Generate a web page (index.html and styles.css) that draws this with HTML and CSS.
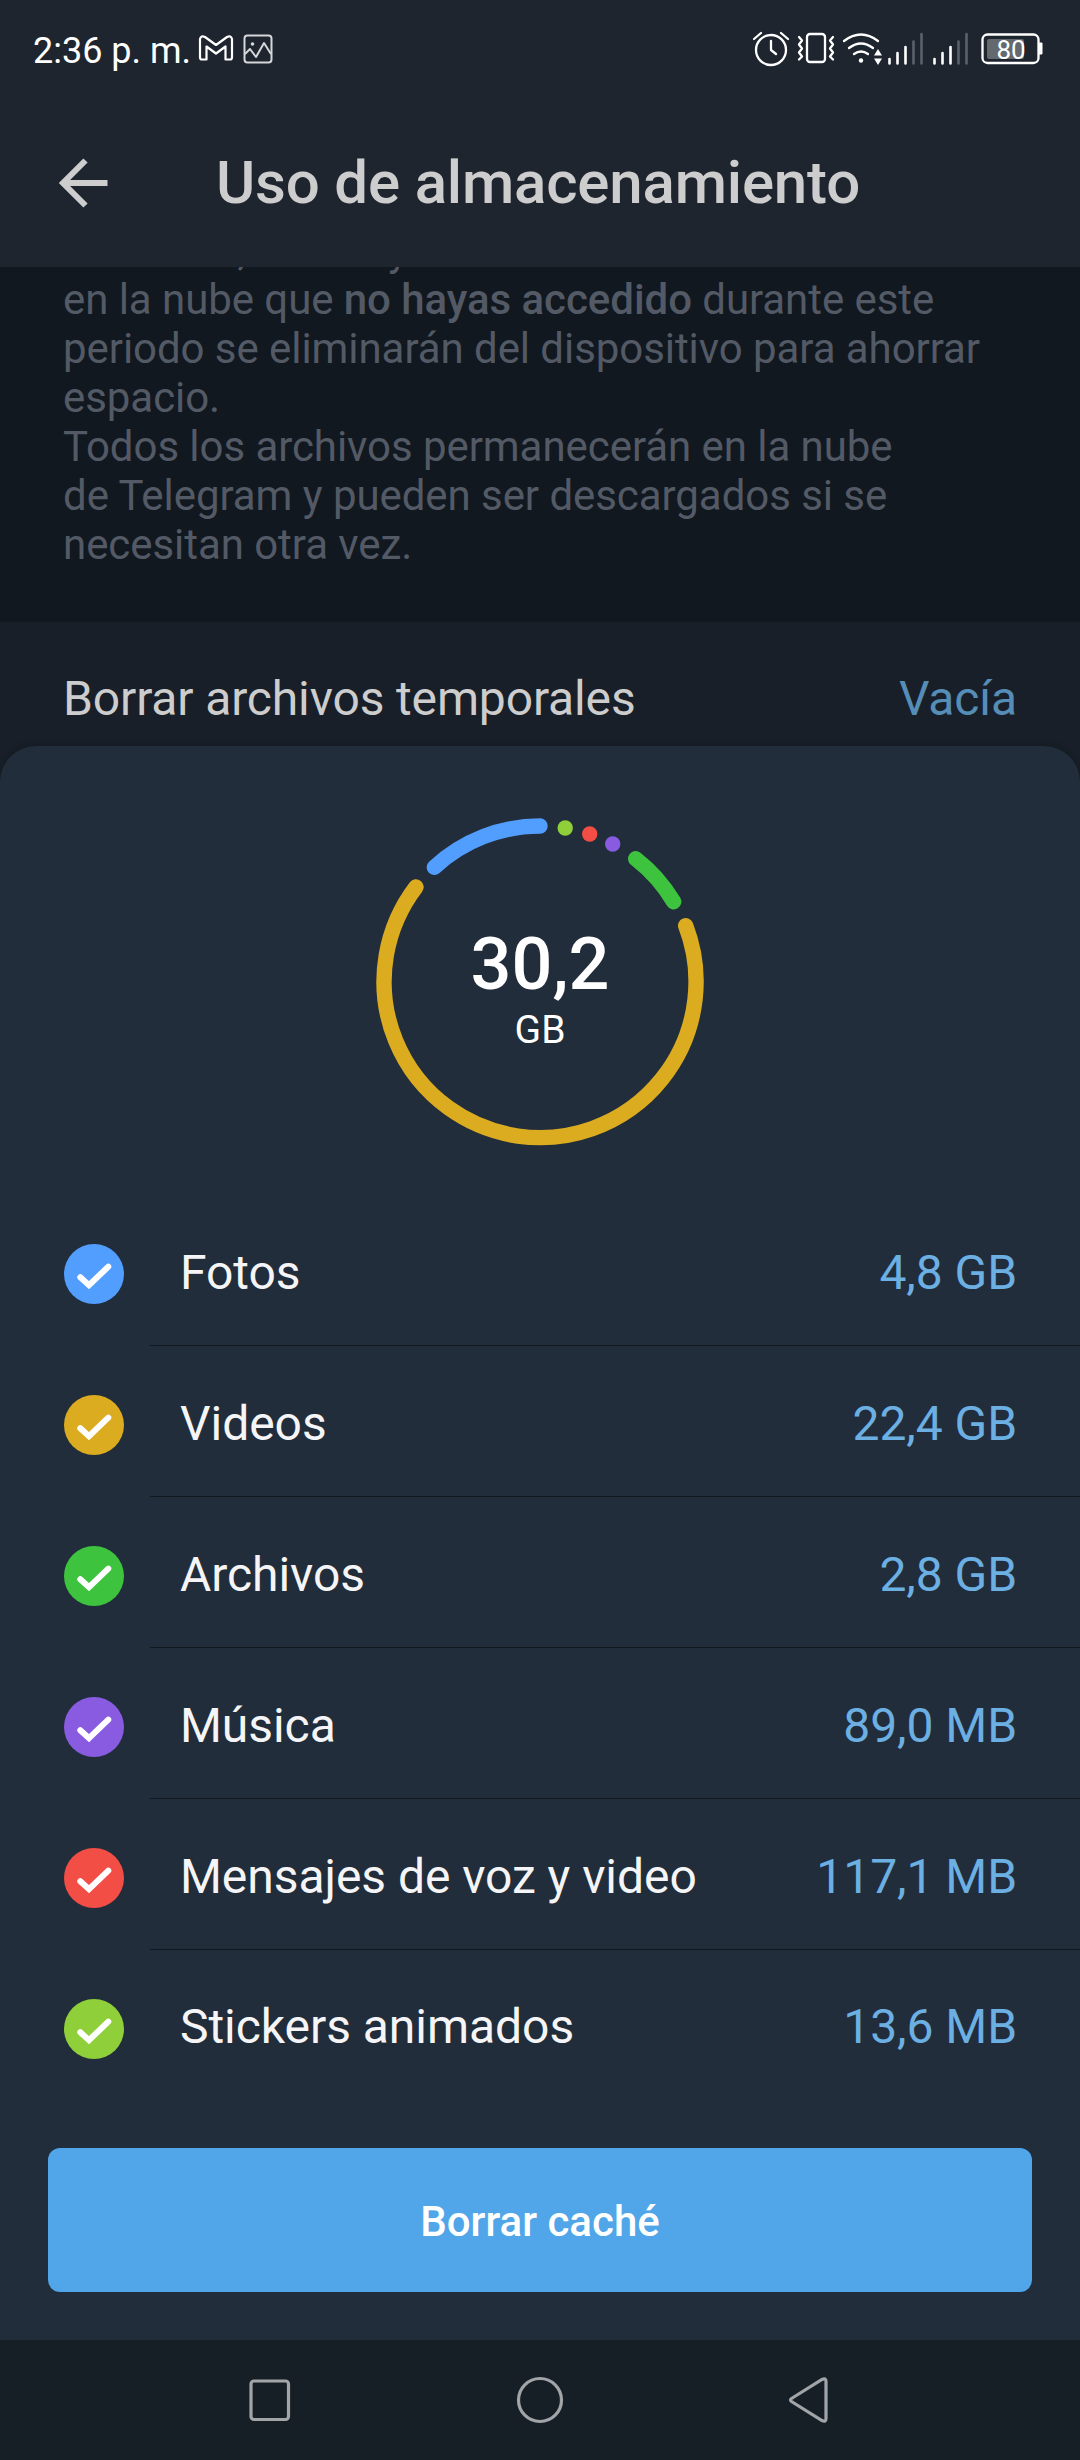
FILE: index.html
```html
<!DOCTYPE html>
<html lang="es">
<head>
    <meta charset="UTF-8">
    <meta name="viewport" content="width=device-width, initial-scale=1.0">
    <title>Uso de almacenamiento</title>
    <link rel="stylesheet" href="styles.css">
</head>
<body>
    <div class="status-bar">
        <span class="clock">2:36 p. m.</span>
        <svg class="mail-icon" width="36" height="30" viewBox="0 0 36 30" fill="none" stroke="#fff" stroke-width="2.2" stroke-linejoin="round">
            <path d="M2 5v18.500q0 2 2 2h4.500V12.500l9.500 7 9.500-7v13H32q2 0 2-2V5q-1-4-5-2L18 11 7 3Q3 1 2 5z"/>
        </svg>
        <svg class="image-icon" width="30" height="30" viewBox="0 0 30 30" fill="none" stroke="#d5d7d9" stroke-width="2" stroke-linejoin="round">
            <rect x="1.500" y="1.500" width="27" height="27" rx="3"/>
            <path d="M2 20l5-5 6 8 8-14 7 11"/>
            <circle cx="9.500" cy="10" r="1.800" fill="#d5d7d9" stroke="none"/>
        </svg>
        <svg class="system-icons" width="327" height="50" viewBox="0 0 327 50" fill="none" stroke="#fff" stroke-width="2.300" stroke-linecap="round" stroke-linejoin="round">
            <!-- alarm -->
            <circle cx="18" cy="26" r="15"/>
            <path d="M18 17v9l5 4M1 15l7-6M35 15l-7-6"/>
            <!-- vibration -->
            <rect x="54" y="10" width="18" height="28" rx="3"/>
            <path d="M46 13l3 3.500-3 4 3 4-3 4 3 4-3 3M80 13l-3 3.500 3 4-3 4 3 4-3 4 3 3"/>
            <!-- wifi -->
            <path d="M91 17q17-13 34 0M96 24q12-9 24 0M101 30q7-5 14 0"/>
            <g fill="#fff" stroke="none">
                <circle cx="108" cy="36.500" r="2.200"/>
                <path d="M121 31.500l4-6.500 4 6.500zM121 34.500h8l-4 6.500z"/>
            </g>
            <!-- signal -->
            <g stroke-width="2.600">
                <path d="M136.500 35v4.500M144.500 29v10.500M152.500 23v16.500M181.500 35v4.500M189.500 29v10.500M197.500 23v16.500"/>
                <path stroke="#5b6169" d="M160.500 17.500v22M168.500 10v29.500M205.500 17.500v22M213.500 10v29.500"/>
            </g>
            <!-- battery -->
            <rect x="229.500" y="10.500" width="56" height="28.500" rx="5"/>
            <rect x="234" y="15" width="37" height="20" rx="2" fill="#646970" stroke="none"/>
            <path d="M286 19h3v11h-3z" fill="#fff" stroke-width="1"/>
            <text class="battery-level" x="258" y="35">80</text>
        </svg>
    </div>

    <div class="header">
        <svg class="back" width="50" height="50" viewBox="0 0 50 50" fill="none" stroke="#cdcdcd" stroke-width="6">
            <path d="M48.500 25H6M26.500 2.500L4 25l22.500 22.500"/>
        </svg>
        <h1>Uso de almacenamiento</h1>
    </div>

    <div class="info">
        <p>Las fotos, videos y otros archivos<br>en la nube que <b>no hayas accedido</b> durante este<br>periodo se eliminarán del dispositivo para ahorrar<br>espacio.<br>Todos los archivos permanecerán en la nube<br>de Telegram y pueden ser descargados si se<br>necesitan otra vez.</p>
    </div>

    <div class="temp-files">
        <span>Borrar archivos temporales</span>
        <span class="temp-value">Vacía</span>
    </div>

    <div class="sheet">
        <div class="chart">
            <svg width="328" height="328" viewBox="0 0 328 328" fill="none" stroke-width="15.400" stroke-linecap="round">
                <path stroke="#529eff" d="M58.300 49.300A156 156 0 0 1 164 8"/>
                <path stroke="#8fcf39" d="M189.200 10h.01"/>
                <path stroke="#f34e46" d="M213.700 16h.01"/>
                <path stroke="#895be0" d="M236.700 26h.01"/>
                <path stroke="#3ec33f" d="M259.700 40.700A156 156 0 0 1 297.700 83.700"/>
                <path stroke="#dcac20" d="M309.700 107.700A156 156 0 1 1 40 69"/>
            </svg>
            <div class="total">
                <div class="total-number">30,2</div>
                <div class="total-unit">GB</div>
            </div>
        </div>

        <div class="list">
            <div class="row">
                <span class="check blue"><svg width="60" height="60" viewBox="0 0 60 60"><path d="M16.300 33.200l8.700 8L44.300 22.700"/></svg></span>
                <div class="row-body"><span>Fotos</span><span class="size">4,8 GB</span></div>
            </div>
            <div class="row">
                <span class="check yellow"><svg width="60" height="60" viewBox="0 0 60 60"><path d="M16.300 33.200l8.700 8L44.300 22.700"/></svg></span>
                <div class="row-body"><span>Videos</span><span class="size">22,4 GB</span></div>
            </div>
            <div class="row">
                <span class="check green"><svg width="60" height="60" viewBox="0 0 60 60"><path d="M16.300 33.200l8.700 8L44.300 22.700"/></svg></span>
                <div class="row-body"><span>Archivos</span><span class="size">2,8 GB</span></div>
            </div>
            <div class="row">
                <span class="check purple"><svg width="60" height="60" viewBox="0 0 60 60"><path d="M16.300 33.200l8.700 8L44.300 22.700"/></svg></span>
                <div class="row-body"><span>Música</span><span class="size">89,0 MB</span></div>
            </div>
            <div class="row">
                <span class="check red"><svg width="60" height="60" viewBox="0 0 60 60"><path d="M16.300 33.200l8.700 8L44.300 22.700"/></svg></span>
                <div class="row-body"><span>Mensajes de voz y video</span><span class="size">117,1 MB</span></div>
            </div>
            <div class="row">
                <span class="check lime"><svg width="60" height="60" viewBox="0 0 60 60"><path d="M16.300 33.200l8.700 8L44.300 22.700"/></svg></span>
                <div class="row-body"><span>Stickers animados</span><span class="size">13,6 MB</span></div>
            </div>
        </div>

        <button class="clear">Borrar caché</button>
    </div>

    <div class="nav-bar">
        <svg width="50" height="50" viewBox="0 0 50 50"><rect x="6" y="6" width="37.500" height="38.500" rx="3"/></svg>
        <svg width="50" height="50" viewBox="0 0 50 50"><circle cx="25" cy="25" r="21.500"/></svg>
        <svg width="50" height="50" viewBox="0 0 50 50"><path d="M6.500 23.500L37 4.500q4-2 4 2v37q0 4-4 2L6.500 26.500q-2-1.500 0-3z"/></svg>
    </div>
</body>
</html>
```
FILE: styles.css
```css
* {
    box-sizing: border-box;
}
body {
    margin: 0;
    width: 1080px;
    height: 2460px;
    overflow: hidden;
    display: flex;
    flex-direction: column;
    font-family: Roboto, "Liberation Sans", sans-serif;
    font-size: 48px;
    background-color: #181f28;
    color: #cdcdcd;
}
svg {
    display: block;
    flex-shrink: 0;
}
h1, p {
    margin: 0;
}

/* Status bar */
.status-bar {
    display: flex;
    height: 98px;
    padding-left: 33px;
    background-color: #1e252f;
    color: #fff;
}
.clock {
    width: 165px;
    padding-top: 30px;
    font-size: 36px;
    line-height: 42px;
    white-space: nowrap;
}
.mail-icon {
    margin-top: 34px;
}
.image-icon {
    margin: 34px 0 0 9px;
}
.system-icons {
    margin: 24px 0 0 auto;
}
.battery-level {
    font-size: 26px;
    text-anchor: middle;
    fill: #fff;
    stroke: none;
}

/* Header */
.header {
    display: flex;
    align-items: center;
    height: 169px;
    padding: 0 56px 0 59px;
    background-color: #1e252f;
}
.back {
    margin-right: 107px;
}
h1 {
    font-size: 60px;
    font-weight: 500;
    line-height: 70px;
    letter-spacing: -0.18px;
    white-space: nowrap;
}

/* Content behind the sheet */
.info {
    display: flex;
    align-items: flex-end;
    height: 355px;
    padding: 0 63px 53px;
    overflow: hidden;
    background-color: #11181f;
    color: #535a66;
    font-size: 42px;
    line-height: 49px;
    letter-spacing: -0.06px;
    white-space: nowrap;
}
.info b {
    font-weight: 500;
}
.temp-files {
    display: flex;
    justify-content: space-between;
    height: 124px;
    padding: 49px 63px 0;
    line-height: 56px;
    letter-spacing: -0.14px;
}
.temp-value {
    color: #568db7;
}

/* Bottom sheet */
.sheet {
    height: 1594px;
    padding-top: 72px;
    border-radius: 36px 36px 0 0;
    background-color: #212d3a;
    box-shadow: 0 0 10px rgba(0, 0, 0, 0.2);
}
.chart {
    display: grid;
    place-items: center;
    height: 328px;
}
.chart > * {
    grid-area: 1 / 1;
}
.total {
    padding-top: 12px;
    text-align: center;
    color: #fff;
}
.total-number {
    font-size: 72px;
    font-weight: 500;
    line-height: 84px;
}
.total-unit {
    font-size: 39px;
    line-height: 46px;
}
.list {
    padding-top: 49px;
}
.row {
    display: flex;
    height: 151px;
    padding-left: 64px;
    color: #f5f5f7;
}
.check {
    width: 60px;
    height: 60px;
    margin: 49px 26px 0 0;
    border-radius: 50%;
}
.check path {
    fill: none;
    stroke: #fff;
    stroke-width: 6;
    stroke-linecap: round;
}
.blue {
    background-color: #529eff;
}
.yellow {
    background-color: #dcac20;
}
.green {
    background-color: #3ec33f;
}
.purple {
    background-color: #895be0;
}
.red {
    background-color: #f34e46;
}
.lime {
    background-color: #8fcf39;
}
.row-body {
    flex: 1;
    display: flex;
    justify-content: space-between;
    padding: 50px 63px 0 30px;
    line-height: 56px;
    letter-spacing: -0.05px;
    border-bottom: 1px solid #10171e;
}
.row:last-child .row-body {
    padding-top: 49px;
    border-bottom: none;
}
.size {
    color: #6cafe2;
}
.clear {
    display: block;
    width: 984px;
    height: 144px;
    margin: 47px auto 0;
    padding: 2px 0 0;
    border: none;
    border-radius: 12px;
    background-color: #50a6e9;
    color: #fff;
    font-family: inherit;
    font-size: 42px;
    font-weight: 500;
}

/* Android navigation */
.nav-bar {
    display: flex;
    justify-content: space-around;
    height: 120px;
    padding: 35px 135px 0;
    background-color: #161e26;
}
.nav-bar svg {
    fill: none;
    stroke: #a2a5a8;
    stroke-width: 3.2;
}
```
